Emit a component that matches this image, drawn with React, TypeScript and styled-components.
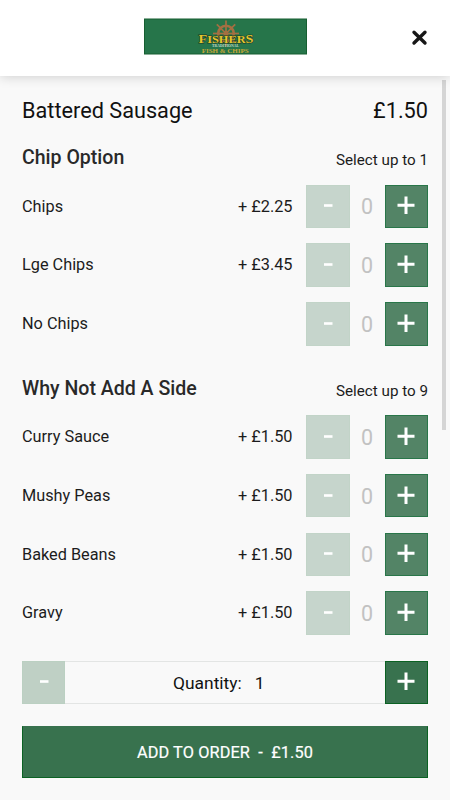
import React from 'react';
import styled, { createGlobalStyle } from 'styled-components';

const GlobalStyle = createGlobalStyle`
  * { box-sizing: border-box; }
  html, body { margin: 0; background: #f9f9f9; overflow: hidden; }
  body { font-family: Roboto, "Liberation Sans", sans-serif; color: #1c1c1c; }
  button { font: inherit; border: 0; padding: 0; }
`;

const Screen = styled.div`
  width: 450px;
  height: 800px;
  display: flex;
  flex-direction: column;
  background: #f9f9f9;
  overflow: hidden;
`;

const Header = styled.header`
  height: 76px;
  flex: none;
  display: grid;
  grid-template-columns: 1fr 163px 1fr;
  align-items: center;
  padding: 0 22px 4px;
  background: #fff;
  box-shadow: 0 1px 11px rgba(0, 0, 0, 0.17);
  z-index: 1;
`;

const Logo = styled.svg`
  grid-column: 2;
  display: block;
  width: 163px;
  height: 37px;
`;

const Close = styled.button`
  justify-self: end;
  display: flex;
  margin-top: 3px;
  background: none;
`;

const Options = styled.main`
  height: 564px;
  flex: none;
  display: flex;
  padding: 20px 4px 0 22px;
`;

const OptionList = styled.div`
  width: 406px;
`;

const ScrollThumb = styled.div`
  width: 4px;
  height: 350px;
  margin: -16px 0 0 14px;
  background: #d5d5d5;
`;

const Title = styled.div`
  display: flex;
  justify-content: space-between;
  font-size: 21.7px;
  line-height: 30px;
  color: #111;
`;

const GroupHeader = styled.div<{ $gap: number }>`
  display: flex;
  justify-content: space-between;
  align-items: flex-start;
  height: 30px;
  margin-top: ${(p) => p.$gap}px;
`;

const GroupName = styled.h2`
  margin: 0;
  font-size: 19.55px;
  line-height: 32px;
  font-weight: 500;
  color: #292929;
`;

const Limit = styled.span`
  font-size: 15.2px;
  line-height: 37px;
`;

const Rows = styled.div`
  display: grid;
  row-gap: 15.2px;
  margin-top: 12.7px;
`;

const Row = styled.div`
  display: grid;
  grid-template-columns: 1fr auto 43.5px 35px 43.5px;
  align-items: center;
  height: 43.5px;
  font-size: 16.3px;
`;

const Label = styled.span`
  padding-bottom: 0.3px;
`;

const Price = styled(Label)`
  margin-right: 13.5px;
`;

const Count = styled.span`
  text-align: center;
  font-size: 21.5px;
  padding-top: 1px;
  color: #c2c2c2;
`;

const StepButton = styled.button<{ $fill: string; $edge: string; $width?: number }>`
  width: ${(p) => p.$width ?? 43.5}px;
  height: 43.5px;
  flex: none;
  display: flex;
  align-items: center;
  justify-content: center;
  background: ${(p) => p.$fill};
  border: 1px solid ${(p) => p.$edge};
`;

const Footer = styled.footer`
  padding: 20.5px 22px 0;
`;

const Quantity = styled.div`
  display: flex;
  width: 406px;
  height: 43.5px;
`;

const QuantityLabel = styled.div`
  flex: 1;
  display: flex;
  align-items: center;
  justify-content: center;
  gap: 13px;
  padding: 1px 12px 0 0;
  border: solid #e3e5e4;
  border-width: 1px 0;
  font-size: 17.4px;
  color: #111;
`;

const AddButton = styled.button`
  display: block;
  width: 406px;
  height: 52px;
  margin-top: 22px;
  background: #38724e;
  border: 1px solid #0b6223;
  border-top-color: #38724e;
  color: #fff;
  font-size: 16.3px;
  letter-spacing: 0.12px;
  -webkit-text-stroke: 0.2px #fff;
  white-space: pre;
`;

const Minus = () => (
  <svg width="18" height="18" viewBox="0 0 18 18" aria-hidden="true">
    <path d="M5 8.5h8.5" stroke="#fff" strokeWidth="2.6" />
  </svg>
);

const Plus = () => (
  <svg width="18" height="20" viewBox="0 0 18 20" aria-hidden="true">
    <path d="M.5 9.2h17M9 .5v17.6" stroke="#fff" strokeWidth="3" />
  </svg>
);

const spokes = [0, 45, 90, 135, 180, 225, 270, 315];

const FishersLogo = () => (
  <Logo viewBox="0 0 163 37" role="img" aria-label="Fishers Traditional Fish & Chips">
    <rect x=".5" y="1" width="162" height="35" fill="#26754a" stroke="#165f31" />
    <g transform="translate(82 15.5)" stroke="#a46f42" fill="none">
      <circle r="7.8" strokeWidth="2.6" />
      <circle r="2" fill="#a46f42" />
      {spokes.map((angle) => (
        <path key={angle} d="M0 0V-13" strokeWidth="1.7" transform={`rotate(${angle})`} />
      ))}
    </g>
    <g textAnchor="middle" fontFamily='"Liberation Serif", serif' fontWeight="700">
      <text x="82" y="25.3" fill="#e6c52d" stroke="#183b25" strokeWidth="1" paintOrder="stroke" textLength="55" lengthAdjust="spacingAndGlyphs">
        <tspan fontSize="12">F</tspan>
        <tspan fontSize="10.5">ISHER</tspan>
        <tspan fontSize="12">S</tspan>
      </text>
      <text x="81.5" y="29" fontSize="3.8" fill="#c3d8ca" textLength="27" lengthAdjust="spacingAndGlyphs">TRADITIONAL</text>
      <text x="81.2" y="34.8" fontSize="7" fill="#c9a735" textLength="47" lengthAdjust="spacingAndGlyphs">FISH &amp; CHIPS</text>
    </g>
  </Logo>
);

interface Item {
  name: string;
  price?: string;
}

const chips: Item[] = [
  { name: 'Chips', price: '+ £2.25' },
  { name: 'Lge Chips', price: '+ £3.45' },
  { name: 'No Chips' },
];

const sides: Item[] = ['Curry Sauce', 'Mushy Peas', 'Baked Beans', 'Gravy'].map((name) => ({
  name,
  price: '+ £1.50',
}));

const Group = ({ name, max, gap, items }: { name: string; max: number; gap: number; items: Item[] }) => (
  <section>
    <GroupHeader $gap={gap}>
      <GroupName>{name}</GroupName>
      <Limit>Select up to {max}</Limit>
    </GroupHeader>
    <Rows>
      {items.map((item) => (
        <Row key={item.name}>
          <Label>{item.name}</Label>
          <Price>{item.price}</Price>
          <StepButton $fill="#c6d5cc" $edge="#c2d4c8" aria-label="Remove"><Minus /></StepButton>
          <Count>0</Count>
          <StepButton $fill="#538466" $edge="#297649" aria-label="Add"><Plus /></StepButton>
        </Row>
      ))}
    </Rows>
  </section>
);

export default function App() {
  return (
    <Screen>
      <GlobalStyle />
      <Header>
        <FishersLogo />
        <Close aria-label="Close">
          <svg width="17" height="17" viewBox="0 0 17 17">
            <path d="M3 3.2 14 14M14 3.2 3 14" stroke="#171717" strokeWidth="3.4" strokeLinecap="round" />
          </svg>
        </Close>
      </Header>
      <Options>
        <OptionList>
          <Title>
            <span>Battered Sausage</span>
            <span>£1.50</span>
          </Title>
          <Group name="Chip Option" max={1} gap={16} items={chips} />
          <Group name="Why Not Add A Side" max={9} gap={27} items={sides} />
        </OptionList>
        <ScrollThumb />
      </Options>
      <Footer>
        <Quantity>
          <StepButton $fill="#bfd0c5" $edge="#bbd0c2" $width={43} aria-label="Decrease"><Minus /></StepButton>
          <QuantityLabel>
            <span>Quantity:</span>
            <span>1</span>
          </QuantityLabel>
          <StepButton $fill="#38724e" $edge="#0b6223" aria-label="Increase"><Plus /></StepButton>
        </Quantity>
        <AddButton>{'ADD TO ORDER  -  £1.50'}</AddButton>
      </Footer>
    </Screen>
  );
}
